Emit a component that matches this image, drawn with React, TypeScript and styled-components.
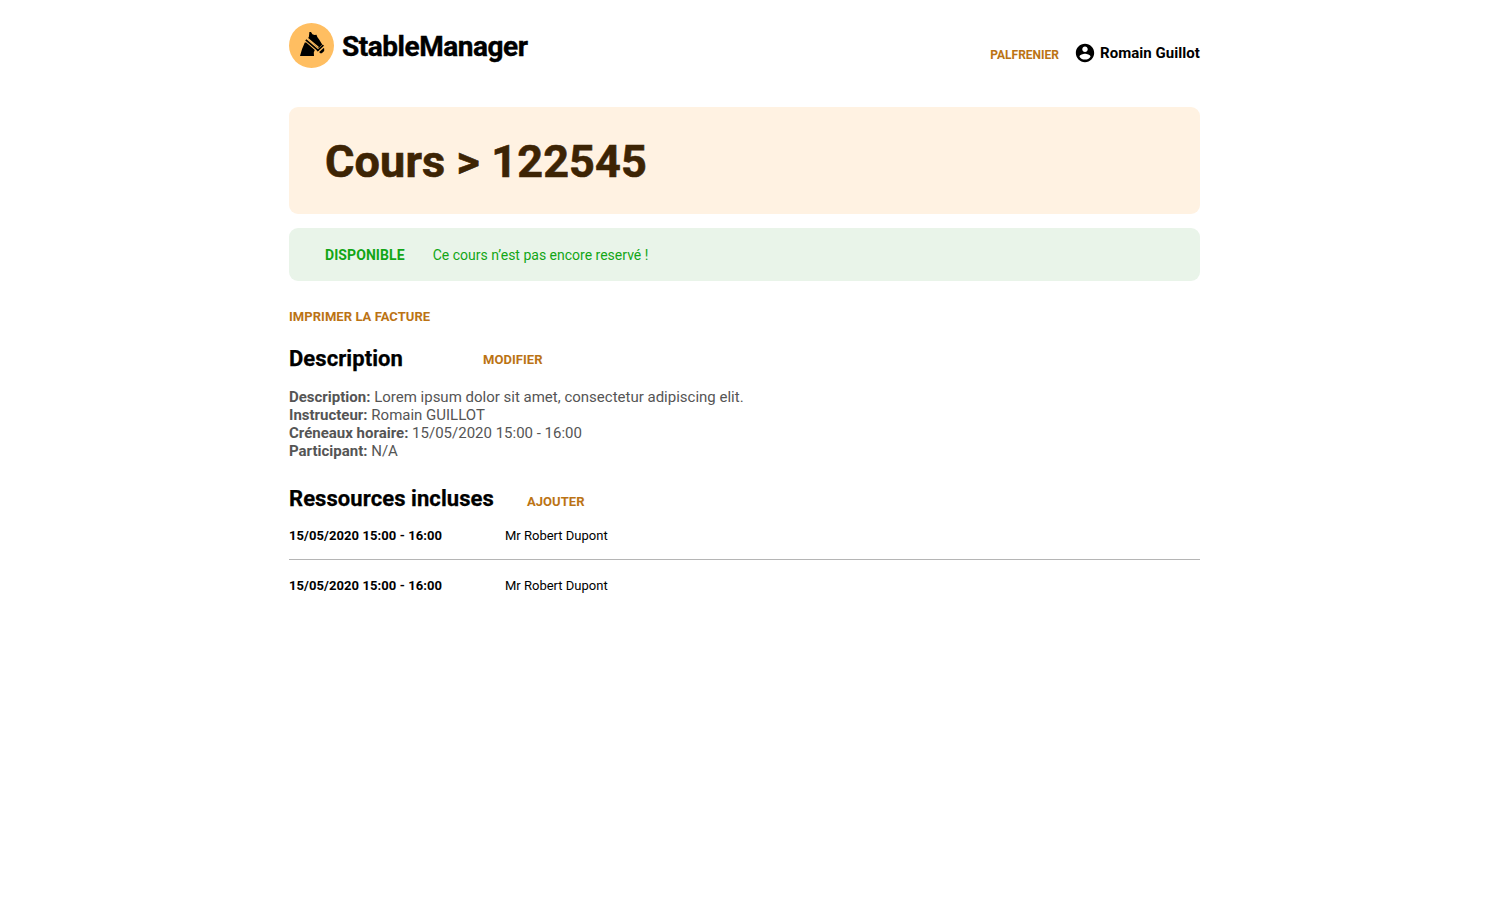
import React from 'react';
import styled, { createGlobalStyle } from 'styled-components';

const GlobalStyle = createGlobalStyle`
  * { box-sizing: border-box; }
  body { margin: 0; background: #fff; color: #000; font-family: Roboto, sans-serif; }
  h1, h2, p, ul, dl, dd { margin: 0; padding: 0; }
`;

const Page = styled.div`
  width: 911px;
  margin-left: 289px;
  padding-top: 23px;
`;

const Header = styled.header`
  display: flex;
  justify-content: space-between;
  height: 84px;
`;

const Brand = styled.div`
  display: flex;
  align-items: center;
  gap: 8px;
  height: 45px;
`;

const BrandName = styled.span`
  padding-top: 2px;
  font-size: 28px;
  font-weight: 700;
  letter-spacing: -0.47px;
  line-height: 46px;
  -webkit-text-stroke: 0.4px currentColor;
`;

const User = styled.div`
  display: flex;
  align-items: center;
  height: 22px;
  margin-top: 19px;
`;

const Role = styled.span`
  color: #bb7314;
  font-size: 12px;
  font-weight: 700;
  line-height: 16px;
  margin: 3px 15px 0 0;
`;

const UserName = styled.span`
  font-size: 15px;
  font-weight: 700;
  line-height: 22px;
  letter-spacing: 0.05px;
  margin-left: 4px;
`;

const Banner = styled.section`
  height: 107px;
  padding: 28px 36px;
  border-radius: 9px;
  background: #fff2e2;
`;

const Title = styled.h1`
  color: #3d2404;
  font-size: 45px;
  font-weight: 700;
  letter-spacing: 0.13px;
  line-height: 53px;
  -webkit-text-stroke: 0.6px currentColor;
`;

const Notice = styled.section`
  display: flex;
  align-items: center;
  gap: 28px;
  height: 53px;
  margin-top: 14px;
  padding: 0 36px;
  border-radius: 9px;
  background: #e9f4e9;
  color: #12a616;
  font-size: 14px;

  strong { letter-spacing: 0.08px; }
`;

const Action = styled.a`
  color: #bb7314;
  font-size: 13px;
  font-weight: 700;
  letter-spacing: 0.05px;
  line-height: 16px;
`;

const Toolbar = styled.div`
  display: flex;
  margin-top: 28px;
`;

const SectionHead = styled.div<{ $top: number; $column: number; $drop: number }>`
  display: grid;
  grid-template-columns: ${(p) => p.$column}px auto;
  justify-content: start;
  align-items: center;
  height: 26px;
  margin-top: ${(p) => p.$top}px;

  ${Action} { margin-top: ${(p) => p.$drop}px; }
`;

const SectionTitle = styled.h2`
  font-size: 22px;
  font-weight: 700;
  letter-spacing: 0.07px;
  line-height: 26px;
  -webkit-text-stroke: 0.25px currentColor;
`;

const Details = styled.div`
  margin-top: 16px;
  color: #555;
  font-size: 15px;
  line-height: 18px;
`;

const Resources = styled.ul`
  list-style: none;
`;

const Resource = styled.li`
  display: grid;
  grid-template-columns: 216px auto;
  height: 47px;
  padding-top: 16px;
  font-size: 13px;
  line-height: 16px;

  strong { letter-spacing: 0.08px; }

  & + & {
    height: 51px;
    padding-top: 18px;
    border-top: 1px solid #b5b5b5;
  }
`;

const HorseLogo = () => (
  <svg width="45" height="45" viewBox="0 0 45 45" aria-hidden="true">
    <circle cx="22.5" cy="22.5" r="22.5" fill="#ffbe61" />
    <path
      d="M20.4 9 H22 L23.4 11.2 L25.5 12 L27.5 11.7 L28.3 14 L30.3 16.8 L33.2 21.5 L29.7 25.2 L18.8 15.8 L19.9 13.8 Z"
      fill="#000"
    />
    <path d="M15.8 19.4 H17.2 L25.8 27 L24.8 29.5 L25 33 H11 Q13 25 15.8 19.4 Z" fill="#000" />
    <path d="M16.8 16.9 L29.5 27.6" stroke="#000" strokeWidth="1.8" />
    <path d="M18.2 15 L29.6 24.4" stroke="#ffbe61" strokeWidth="1.1" />
    <path d="M28.2 28 L34.4 22.2" stroke="#000" strokeWidth="1.7" />
    <path
      d="M30.2 29 L34.6 24.9 L35.2 25.4 V28 L32.8 30.3 H31.2 Z"
      fill="#000"
    />
  </svg>
);

const AccountIcon = () => (
  <svg width="22" height="22" viewBox="0 0 24 24" aria-hidden="true">
    <path d="M12 2C6.48 2 2 6.48 2 12s4.48 10 10 10 10-4.48 10-10S17.52 2 12 2zm0 3c1.66 0 3 1.34 3 3s-1.34 3-3 3-3-1.34-3-3 1.34-3 3-3zm0 14.2c-2.5 0-4.71-1.28-6-3.22.03-1.99 4-3.08 6-3.08 1.99 0 5.97 1.09 6 3.08-1.29 1.94-3.5 3.22-6 3.22z" />
  </svg>
);

const details = [
  ['Description:', 'Lorem ipsum dolor sit amet, consectetur adipiscing elit.'],
  ['Instructeur:', 'Romain GUILLOT'],
  ['Créneaux horaire:', '15/05/2020 15:00 - 16:00'],
  ['Participant:', 'N/A'],
];

const resources = [
  { slot: '15/05/2020 15:00 - 16:00', name: 'Mr Robert Dupont' },
  { slot: '15/05/2020 15:00 - 16:00', name: 'Mr Robert Dupont' },
];

export default function App() {
  return (
    <>
      <GlobalStyle />
      <Page>
        <Header>
          <Brand>
            <HorseLogo />
            <BrandName>StableManager</BrandName>
          </Brand>
          <User>
            <Role>PALFRENIER</Role>
            <AccountIcon />
            <UserName>Romain Guillot</UserName>
          </User>
        </Header>
        <Banner>
          <Title>Cours &gt; 122545</Title>
        </Banner>
        <Notice>
          <strong>DISPONIBLE</strong>
          <span>Ce cours n’est pas encore reservé !</span>
        </Notice>
        <Toolbar>
          <Action>IMPRIMER LA FACTURE</Action>
        </Toolbar>
        <SectionHead $top={21} $column={194} $drop={2}>
          <SectionTitle>Description</SectionTitle>
          <Action>MODIFIER</Action>
        </SectionHead>
        <Details>
          {details.map(([label, value]) => (
            <p key={label}>
              <strong>{label}</strong> {value}
            </p>
          ))}
        </Details>
        <SectionHead $top={26} $column={238} $drop={6}>
          <SectionTitle>Ressources incluses</SectionTitle>
          <Action>AJOUTER</Action>
        </SectionHead>
        <Resources>
          {resources.map((r, i) => (
            <Resource key={i}>
              <strong>{r.slot}</strong>
              <span>{r.name}</span>
            </Resource>
          ))}
        </Resources>
      </Page>
    </>
  );
}
